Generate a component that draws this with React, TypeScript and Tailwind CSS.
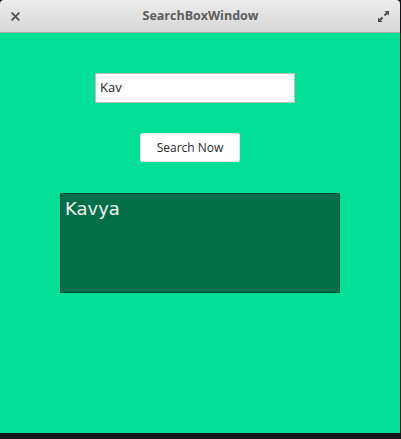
import React from "react";

export default function App() {
  return (
    <div className="w-[401px] h-[439px] bg-[#131517] flex flex-col overflow-hidden" style={{ fontFamily: '"Open Sans", "Noto Sans", sans-serif' }}>
      <div className="w-[400px] h-[433px] flex flex-col rounded-t-[4px] overflow-hidden">
        <div className="h-[33px] flex items-center justify-between px-[10px] bg-gradient-to-b from-[#ececec] to-[#d6d6d6] border-b border-[#a9a9a9]">
          <svg width="9" height="9" viewBox="0 0 9 9" className="ml-[1px]">
            <path d="M1.2 1.2 L7.8 7.8 M7.8 1.2 L1.2 7.8" stroke="#505050" strokeWidth="1.8" strokeLinecap="square" />
          </svg>
          <span className="text-[12.5px] font-bold text-[#5c5c5c] ml-[4px]">SearchBoxWindow</span>
          <svg width="13" height="13" viewBox="0 0 13 13">
            <path d="M7.5 1 H12 V5.5 Z" fill="#4a4a4a" />
            <path d="M1 7.5 V12 H5.5 Z" fill="#4a4a4a" />
            <path d="M10 3 L7.5 5.5 M3 10 L5.5 7.5" stroke="#4a4a4a" strokeWidth="2" />
          </svg>
        </div>
        <div className="flex-1 bg-[#02df96] flex flex-col items-start">
          <div className="ml-[95px] mt-[40px] w-[200px] h-[30px] bg-white border border-[#bdbdbd] flex items-center pl-[4px] text-[13px] text-[#222]">
            Kav
          </div>
          <div className="ml-[140px] mt-[30px] w-[100px] h-[29px] bg-white rounded-[2px] border border-[#e4e4e4] flex items-center justify-center text-[12px] text-[#2a2a2a]">
            Search Now
          </div>
          <div className="ml-[60px] mt-[31px] w-[280px] h-[100px] bg-[#036f49] border border-[#034a31] pl-[4px] pt-[4px] text-[18px] leading-[22px] text-[#f2f2f2]" style={{ fontFamily: '"DejaVu Sans", sans-serif' }}>
            Kavya
          </div>
        </div>
      </div>
    </div>
  );
}
